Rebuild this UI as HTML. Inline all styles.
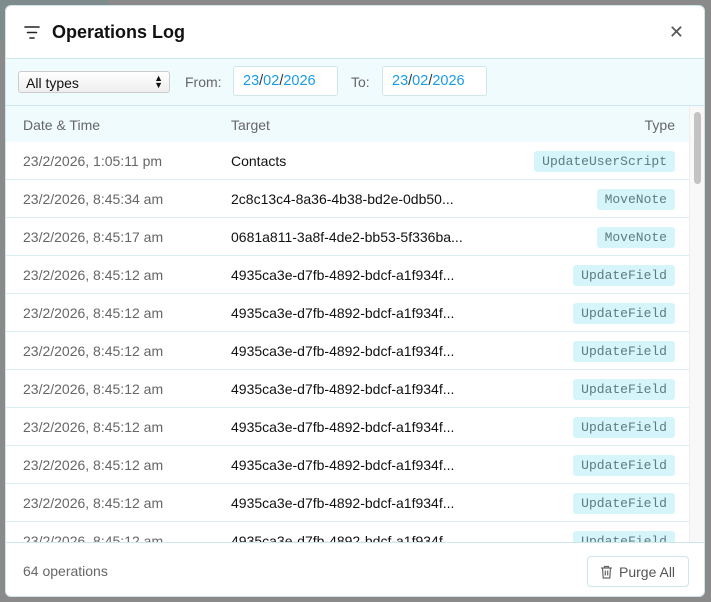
<!DOCTYPE html>
<html><head><style>
*{box-sizing:border-box;margin:0;padding:0}
body{width:711px;height:602px;background:#8a8a8a;font-family:"Liberation Sans",sans-serif;position:relative;overflow:hidden}
.bgl{position:absolute;left:0;top:0;width:108px;height:40px;background:#7f8c8e}
.modal{position:absolute;left:5px;top:5px;width:700px;height:592px;background:#fff;border-radius:6px;overflow:hidden;border:1px solid #cfe3e8}
.hdr{height:53px;position:relative;border-bottom:1px solid #cfe6ec}
.hdr h1{position:absolute;left:46px;top:16px;font-size:18px;font-weight:bold;color:#111}
.x{position:absolute;right:20px;top:16px;font-size:18px;color:#555}
.bar{height:47px;background:#f0fbfe;border-bottom:1px solid #cfe6ec;position:relative;font-size:14px;color:#666}
.sel{position:absolute;left:12px;top:12px;width:152px;height:22px;border:1px solid #ccc;border-radius:3px;background:linear-gradient(#fff,#eee);color:#111;padding:3px 0 0 7px;font-size:14px}
.sel span{position:absolute;right:6px;top:3px;font-size:9px;line-height:7px}
.date{position:absolute;top:7px;width:105px;height:30px;border:1px solid #cfe6ec;background:#fff;border-radius:3px;color:#1a9be8;padding:6px 0 0 9px;font-size:14.5px}
.date b{color:#333;font-weight:normal}
.th{height:36px;background:#f0fbfe;position:relative;font-size:14px;color:#666}
.row{height:38px;border-bottom:1px solid #dbeef2;position:relative;font-size:14px}
.c1{position:absolute;left:17px;top:11px;color:#666}
.c2{position:absolute;left:225px;top:11px;color:#111}
.tag{position:absolute;right:15px;top:9px;background:#d5f5fb;color:#5f7a80;font-family:"Liberation Mono",monospace;font-size:13px;padding:3px 8px;border-radius:3px}
.th .t{position:absolute;top:11px}
.scroll{position:absolute;left:0;top:100px;width:684px;height:436px;overflow:hidden}
.sb{position:absolute;right:0;top:100px;width:15px;height:436px;background:#f8f8f8;border-left:1px solid #eee}
.sb i{position:absolute;left:4px;top:6px;width:7px;height:72px;background:#c3c3c3;border-radius:4px}
.foot{position:absolute;left:0;top:536px;width:698px;height:56px;border-top:1px solid #cfe6ec;background:#fff}
.foot .n{position:absolute;left:17px;top:20px;font-size:14px;color:#666}
.btn{position:absolute;right:15px;top:13px;width:102px;height:31px;border:1px solid #cfe6ec;border-radius:4px;font-size:14px;color:#555;padding:7px 0 0 31px}
</style></head><body>
<div class="bgl"></div>
<div class="modal">
<div class="hdr">
<svg style="position:absolute;left:18px;top:20px" width="16" height="14" viewBox="0 0 16 14"><path d="M1 1h14M3.5 6.5h9M6 12h4" stroke="#222" stroke-width="1.6" stroke-linecap="round"/></svg>
<h1>Operations Log</h1><div class="x">✕</div></div>
<div class="bar">
<div class="sel">All types<span>▲<br>▼</span></div>
<div style="position:absolute;left:179px;top:15px">From:</div>
<div class="date" style="left:227px">23<b>/</b>02<b>/</b>2026</div>
<div style="position:absolute;left:345px;top:15px">To:</div>
<div class="date" style="left:376px">23<b>/</b>02<b>/</b>2026</div>
</div>
<div class="scroll">
<div class="th"><span class="t" style="left:17px">Date &amp; Time</span><span class="t" style="left:225px">Target</span><span class="t" style="right:15px">Type</span></div>
<div class="row"><span class="c1">23/2/2026, 1:05:11 pm</span><span class="c2">Contacts</span><span class="tag">UpdateUserScript</span></div>
<div class="row"><span class="c1">23/2/2026, 8:45:34 am</span><span class="c2">2c8c13c4-8a36-4b38-bd2e-0db50...</span><span class="tag">MoveNote</span></div>
<div class="row"><span class="c1">23/2/2026, 8:45:17 am</span><span class="c2">0681a811-3a8f-4de2-bb53-5f336ba...</span><span class="tag">MoveNote</span></div>
<div class="row"><span class="c1">23/2/2026, 8:45:12 am</span><span class="c2">4935ca3e-d7fb-4892-bdcf-a1f934f...</span><span class="tag">UpdateField</span></div>
<div class="row"><span class="c1">23/2/2026, 8:45:12 am</span><span class="c2">4935ca3e-d7fb-4892-bdcf-a1f934f...</span><span class="tag">UpdateField</span></div>
<div class="row"><span class="c1">23/2/2026, 8:45:12 am</span><span class="c2">4935ca3e-d7fb-4892-bdcf-a1f934f...</span><span class="tag">UpdateField</span></div>
<div class="row"><span class="c1">23/2/2026, 8:45:12 am</span><span class="c2">4935ca3e-d7fb-4892-bdcf-a1f934f...</span><span class="tag">UpdateField</span></div>
<div class="row"><span class="c1">23/2/2026, 8:45:12 am</span><span class="c2">4935ca3e-d7fb-4892-bdcf-a1f934f...</span><span class="tag">UpdateField</span></div>
<div class="row"><span class="c1">23/2/2026, 8:45:12 am</span><span class="c2">4935ca3e-d7fb-4892-bdcf-a1f934f...</span><span class="tag">UpdateField</span></div>
<div class="row"><span class="c1">23/2/2026, 8:45:12 am</span><span class="c2">4935ca3e-d7fb-4892-bdcf-a1f934f...</span><span class="tag">UpdateField</span></div>
<div class="row"><span class="c1">23/2/2026, 8:45:12 am</span><span class="c2">4935ca3e-d7fb-4892-bdcf-a1f934f...</span><span class="tag">UpdateField</span></div>
</div>
<div class="sb"><i></i></div>
<div class="foot"><span class="n">64 operations</span>
<div class="btn"><svg style="position:absolute;left:12px;top:8px" width="13" height="14" viewBox="0 0 13 14"><path d="M1 3h11M4.5 3V1.5h4V3M2.5 3l.7 10h6.6l.7-10M5.3 5.5v5M7.7 5.5v5" stroke="#666" stroke-width="1.2" fill="none"/></svg>Purge All</div></div>
</div>
</body></html>
